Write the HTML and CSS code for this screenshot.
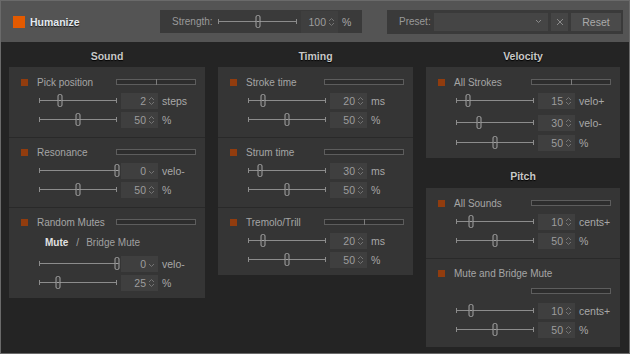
FILE: index.html
```html
<!DOCTYPE html>
<html>
<head>
<meta charset="utf-8">
<title>Humanize</title>
<link rel="stylesheet" href="styles.css">
</head>
<body>
<div class="window">
  <header class="topbar">
    <div class="brand"><span class="brand-box"></span><span class="brand-name">Humanize</span></div>
    <div class="strength">
      <span class="strength-label">Strength:</span>
      <div class="slider strength-slider"><span class="thumb" style="left:51%"></span></div>
      <div class="num num-tall"><span class="val">100</span><svg class="spin" viewBox="0 0 7 10"><path d="M1 4L3.5 1.5L6 4M1 6L3.5 8.5L6 6"/></svg></div>
      <span class="unit">%</span>
    </div>
    <div class="preset">
      <span class="preset-label">Preset:</span>
      <div class="combo"><svg class="chev" viewBox="0 0 7 5"><path d="M1 1L3.5 3.5L6 1"/></svg></div>
      <div class="xbtn"><svg class="xicon" viewBox="0 0 8 8"><path d="M1 1L7 7M7 1L1 7"/></svg></div>
      <div class="reset">Reset</div>
    </div>
  </header>

  <main class="columns">
    <section class="col">
      <h2 class="col-head">Sound</h2>
      <div class="panel">
        <div class="sec">
          <div class="title"><span class="check"></span><span class="label">Pick position</span><span class="meter tick"></span></div>
          <div class="row"><div class="slider"><span class="thumb" style="left:27%"></span></div><div class="num"><span class="val">2</span><svg class="spin" viewBox="0 0 7 10"><path d="M1 4L3.5 1.5L6 4M1 6L3.5 8.5L6 6"/></svg></div><span class="unit">steps</span></div>
          <div class="row"><div class="slider"><span class="thumb" style="left:50%"></span></div><div class="num"><span class="val">50</span><svg class="spin" viewBox="0 0 7 10"><path d="M1 4L3.5 1.5L6 4M1 6L3.5 8.5L6 6"/></svg></div><span class="unit">%</span></div>
        </div>
        <div class="sec">
          <div class="title"><span class="check"></span><span class="label">Resonance</span><span class="meter"></span></div>
          <div class="row"><div class="slider"><span class="thumb" style="left:100%"></span></div><div class="num"><span class="val">0</span><svg class="spin" viewBox="0 0 7 10"><path d="M1 5L3.5 7.5L6 5"/></svg></div><span class="unit">velo-</span></div>
          <div class="row"><div class="slider"><span class="thumb" style="left:50%"></span></div><div class="num"><span class="val">50</span><svg class="spin" viewBox="0 0 7 10"><path d="M1 4L3.5 1.5L6 4M1 6L3.5 8.5L6 6"/></svg></div><span class="unit">%</span></div>
        </div>
        <div class="sec">
          <div class="title"><span class="check"></span><span class="label">Random Mutes</span><span class="meter"></span></div>
          <div class="mute-line"><span class="mute-on">Mute</span><span class="mute-sep">/</span><span class="mute-off">Bridge Mute</span></div>
          <div class="row gap4"><div class="slider"><span class="thumb" style="left:100%"></span></div><div class="num"><span class="val">0</span><svg class="spin" viewBox="0 0 7 10"><path d="M1 5L3.5 7.5L6 5"/></svg></div><span class="unit">velo-</span></div>
          <div class="row"><div class="slider"><span class="thumb" style="left:24%"></span></div><div class="num"><span class="val">25</span><svg class="spin" viewBox="0 0 7 10"><path d="M1 4L3.5 1.5L6 4M1 6L3.5 8.5L6 6"/></svg></div><span class="unit">%</span></div>
          <div class="end-pad"></div>
        </div>
      </div>
    </section>

    <section class="col">
      <h2 class="col-head">Timing</h2>
      <div class="panel">
        <div class="sec">
          <div class="title"><span class="check"></span><span class="label">Stroke time</span><span class="meter"></span></div>
          <div class="row"><div class="slider"><span class="thumb" style="left:19%"></span></div><div class="num"><span class="val">20</span><svg class="spin" viewBox="0 0 7 10"><path d="M1 4L3.5 1.5L6 4M1 6L3.5 8.5L6 6"/></svg></div><span class="unit">ms</span></div>
          <div class="row"><div class="slider"><span class="thumb" style="left:50%"></span></div><div class="num"><span class="val">50</span><svg class="spin" viewBox="0 0 7 10"><path d="M1 4L3.5 1.5L6 4M1 6L3.5 8.5L6 6"/></svg></div><span class="unit">%</span></div>
        </div>
        <div class="sec">
          <div class="title"><span class="check"></span><span class="label">Strum time</span><span class="meter"></span></div>
          <div class="row"><div class="slider"><span class="thumb" style="left:15%"></span></div><div class="num"><span class="val">30</span><svg class="spin" viewBox="0 0 7 10"><path d="M1 4L3.5 1.5L6 4M1 6L3.5 8.5L6 6"/></svg></div><span class="unit">ms</span></div>
          <div class="row"><div class="slider"><span class="thumb" style="left:50%"></span></div><div class="num"><span class="val">50</span><svg class="spin" viewBox="0 0 7 10"><path d="M1 4L3.5 1.5L6 4M1 6L3.5 8.5L6 6"/></svg></div><span class="unit">%</span></div>
        </div>
        <div class="sec">
          <div class="title"><span class="check"></span><span class="label">Tremolo/Trill</span><span class="meter tick"></span></div>
          <div class="row"><div class="slider"><span class="thumb" style="left:19%"></span></div><div class="num"><span class="val">20</span><svg class="spin" viewBox="0 0 7 10"><path d="M1 4L3.5 1.5L6 4M1 6L3.5 8.5L6 6"/></svg></div><span class="unit">ms</span></div>
          <div class="row"><div class="slider"><span class="thumb" style="left:50%"></span></div><div class="num"><span class="val">50</span><svg class="spin" viewBox="0 0 7 10"><path d="M1 4L3.5 1.5L6 4M1 6L3.5 8.5L6 6"/></svg></div><span class="unit">%</span></div>
          <div class="end-pad short"></div>
        </div>
      </div>
    </section>

    <section class="col">
      <h2 class="col-head">Velocity</h2>
      <div class="panel">
        <div class="sec">
          <div class="title"><span class="check"></span><span class="label">All Strokes</span><span class="meter tick"></span></div>
          <div class="row"><div class="slider"><span class="thumb" style="left:15%"></span></div><div class="num"><span class="val">15</span><svg class="spin" viewBox="0 0 7 10"><path d="M1 4L3.5 1.5L6 4M1 6L3.5 8.5L6 6"/></svg></div><span class="unit">velo+</span></div>
          <div class="row gap5"><div class="slider"><span class="thumb" style="left:29%"></span></div><div class="num"><span class="val">30</span><svg class="spin" viewBox="0 0 7 10"><path d="M1 4L3.5 1.5L6 4M1 6L3.5 8.5L6 6"/></svg></div><span class="unit">velo-</span></div>
          <div class="row gap3"><div class="slider"><span class="thumb" style="left:50%"></span></div><div class="num"><span class="val">50</span><svg class="spin" viewBox="0 0 7 10"><path d="M1 4L3.5 1.5L6 4M1 6L3.5 8.5L6 6"/></svg></div><span class="unit">%</span></div>
          <div class="end-pad"></div>
        </div>
      </div>

      <h2 class="col-head next">Pitch</h2>
      <div class="panel">
        <div class="sec">
          <div class="title"><span class="check"></span><span class="label">All Sounds</span><span class="meter"></span></div>
          <div class="row"><div class="slider"><span class="thumb" style="left:19%"></span></div><div class="num"><span class="val">10</span><svg class="spin" viewBox="0 0 7 10"><path d="M1 4L3.5 1.5L6 4M1 6L3.5 8.5L6 6"/></svg></div><span class="unit">cents+</span></div>
          <div class="row"><div class="slider"><span class="thumb" style="left:50%"></span></div><div class="num"><span class="val">50</span><svg class="spin" viewBox="0 0 7 10"><path d="M1 4L3.5 1.5L6 4M1 6L3.5 8.5L6 6"/></svg></div><span class="unit">%</span></div>
        </div>
        <div class="sec">
          <div class="title"><span class="check"></span><span class="label">Mute and Bridge Mute</span></div>
          <div class="meter-line"><span class="meter"></span></div>
          <div class="row gap7"><div class="slider"><span class="thumb" style="left:19%"></span></div><div class="num"><span class="val">10</span><svg class="spin" viewBox="0 0 7 10"><path d="M1 4L3.5 1.5L6 4M1 6L3.5 8.5L6 6"/></svg></div><span class="unit">cents+</span></div>
          <div class="row"><div class="slider"><span class="thumb" style="left:50%"></span></div><div class="num"><span class="val">50</span><svg class="spin" viewBox="0 0 7 10"><path d="M1 4L3.5 1.5L6 4M1 6L3.5 8.5L6 6"/></svg></div><span class="unit">%</span></div>
        </div>
      </div>
    </section>
  </main>
</div>
</body>
</html>
```

FILE: styles.css
```css
* { box-sizing: border-box; margin: 0; padding: 0; }

html, body { width: 630px; height: 354px; overflow: hidden; }

body {
  background: #242424;
  font-family: "Liberation Sans", Arial, sans-serif;
  font-size: 10px;
  color: #a4a4a4;
}

.window {
  width: 630px;
  height: 354px;
  display: flex;
  flex-direction: column;
  background: #242424;
  border: 1px solid #6a6a6a;
}

/* ---------- top bar ---------- */
.topbar {
  height: 41px;
  flex-shrink: 0;
  background: #545454;
  display: flex;
  align-items: center;
}

.brand {
  width: 159px;
  padding-left: 12px;
  display: flex;
  align-items: center;
}
.brand-box { width: 12px; height: 12px; background: #e35a00; }
.brand-name {
  margin-left: 5px;
  font-weight: bold;
  font-size: 10.5px;
  color: #e4eaf0;
  text-shadow: 0 1px 1px #1e1e1e;
}

.strength {
  width: 202px;
  height: 23px;
  background: #3a3a3a;
  display: flex;
  align-items: center;
  padding-left: 12px;
}
.strength-label { width: 46px; color: #999; }
.strength .slider { width: 79px; }
.num.num-tall { height: 22px; }

.preset {
  margin-left: 25px;
  width: 236px;
  height: 24px;
  background: #3a3a3a;
  display: flex;
  align-items: center;
  padding-left: 12px;
}
.preset-label { width: 35px; color: #999; }
.combo {
  width: 114px;
  height: 18px;
  background: #454545;
  display: flex;
  align-items: center;
  justify-content: flex-end;
  padding-right: 6px;
}
.chev { width: 7px; height: 5px; fill: none; stroke: #8a8a8a; stroke-width: 1; }
.xbtn {
  margin-left: 3px;
  width: 17px;
  height: 18px;
  background: #454545;
  display: flex;
  align-items: center;
  justify-content: center;
}
.xicon { width: 8px; height: 8px; fill: none; stroke: #8a8a8a; stroke-width: 1; }
.reset {
  margin-left: 3px;
  width: 50px;
  height: 18px;
  background: #4a4a4a;
  color: #aaa;
  font-size: 10.5px;
  display: flex;
  align-items: center;
  justify-content: center;
}

/* ---------- columns ---------- */
.columns {
  display: grid;
  grid-template-columns: 196px 195px 194px;
  column-gap: 13px;
  padding-left: 8px;
  align-items: start;
}
.col { display: flex; flex-direction: column; }

.col-head {
  height: 25px;
  padding-top: 7px;
  line-height: 14px;
  text-align: center;
  font-size: 10.5px;
  font-weight: bold;
  color: #c8c8c8;
  text-shadow: 0 1px 1px #000;
}
.col-head.next { margin-top: 4px; height: 26px; }

.panel { background: #353535; }

.sec { padding: 7px 9px 9px 12px; }
.sec + .sec { border-top: 1px solid #292929; padding-top: 6px; }
.sec:has(.end-pad) { padding-bottom: 0; }
.end-pad { height: 7px; }
.end-pad.short { height: 7px; }

.title { display: flex; align-items: center; height: 16px; }
.check { width: 7px; height: 7px; background: #913c0e; flex-shrink: 0; }
.label { margin-left: 9px; color: #a5a5a5; }

.meter {
  margin-left: auto;
  width: 80px;
  height: 6px;
  border: 1px solid #5d5d5d;
  background: #2d2d2d;
  position: relative;
}
.meter.tick::after {
  content: "";
  position: absolute;
  left: 50%;
  top: -1px;
  bottom: -1px;
  width: 1px;
  background: #7c7c7c;
}
.meter-line {
  display: flex;
  align-items: center;
  height: 8px;
  margin-top: 6px;
}

.mute-line {
  height: 17px;
  margin-top: 4px;
  padding-left: 24px;
  display: flex;
  align-items: center;
}
.mute-on { font-weight: bold; color: #e2e2e2; }
.mute-sep { margin: 0 7px 0 8px; color: #a0a0a0; }
.mute-off { color: #a0a0a0; }

.row {
  display: flex;
  align-items: center;
  height: 17px;
  margin-top: 2px;
  padding-left: 18px;
}
.row.gap3 { margin-top: 3px; }
.row.gap4 { margin-top: 4px; }
.row.gap5 { margin-top: 5px; }
.row.gap7 { margin-top: 7px; }

.slider {
  position: relative;
  width: 78px;
  height: 13px;
  flex-shrink: 0;
}
.slider::before {
  content: "";
  position: absolute;
  left: 0;
  right: 0;
  top: 4px;
  height: 5px;
  border-left: 1px solid #8c8c8c;
  border-right: 1px solid #8c8c8c;
  background: linear-gradient(#8c8c8c, #8c8c8c) center / 100% 1px no-repeat;
}
.thumb {
  position: absolute;
  top: 0;
  width: 5px;
  height: 13px;
  transform: translateX(-50%);
  border: 1px solid #a3a3a3;
  border-radius: 2px;
  background: #3a3a3a;
}
.thumb::after {
  content: "";
  position: absolute;
  left: 0;
  right: 0;
  top: 5px;
  height: 1px;
  background: #a3a3a3;
}

.num {
  margin-left: 4px;
  width: 37px;
  height: 16px;
  flex-shrink: 0;
  background: #3f3f3f;
  display: flex;
  align-items: center;
  justify-content: flex-end;
  padding-right: 3px;
  color: #9d9d9d;
  font-size: 10.5px;
}
.val { margin-right: 2px; }
.spin { width: 7px; height: 10px; fill: none; stroke: #747474; stroke-width: 1; }

.unit { margin-left: 4px; color: #a8a8a8; font-size: 10.5px; }
```
